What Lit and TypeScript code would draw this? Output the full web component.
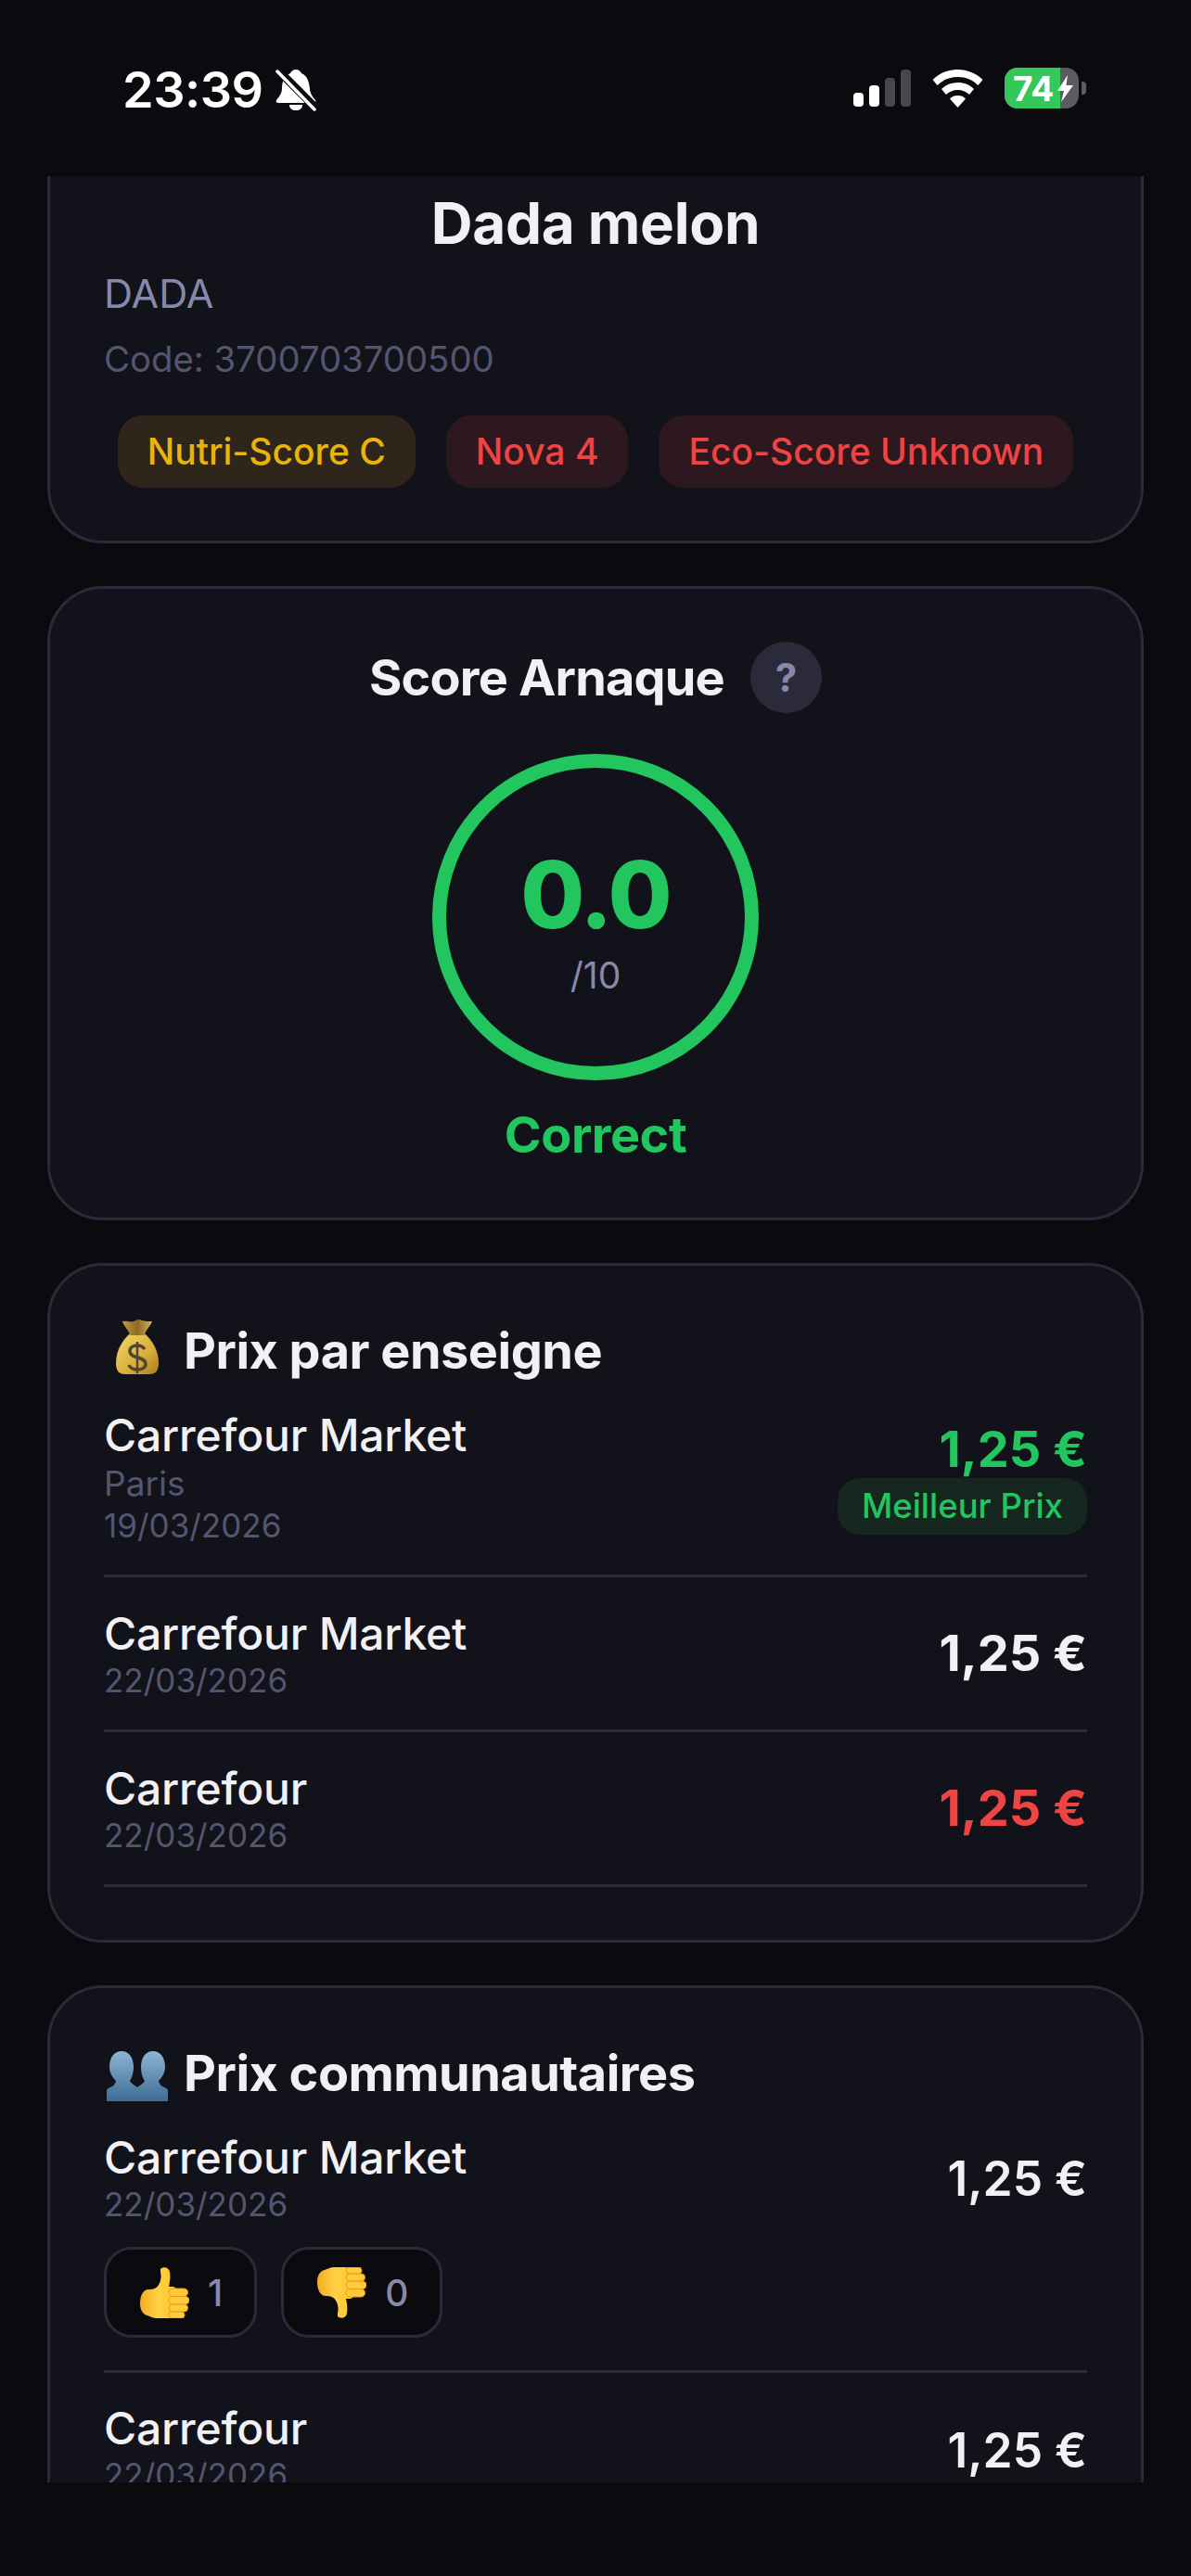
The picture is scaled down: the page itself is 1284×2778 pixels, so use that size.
import { LitElement, html, css } from "lit";
import { customElement } from "lit/decorators.js";

const thumb = (flip: boolean, id: string) => html`<svg class="thumb" viewBox="0 0 53 55">
  <defs><linearGradient id=${id} x1="0" y1="0" x2="1" y2="0"><stop offset="0" stop-color="#f5ac1f"/><stop offset=".5" stop-color="#ffd145"/><stop offset="1" stop-color="#ffc62e"/></linearGradient></defs>
  <g transform=${flip ? "translate(0 55) scale(1 -1)" : ""}>
    <path fill="url(#${id})" d="M22 2c3-3 9-2 10 3 1 6 0 11-1 16h4c3 0 4 2 4 4l-2 26c-1 3-3 4-6 4H18c-4 0-7-2-10-3-5-1-8-6-8-13 0-8 3-15 9-15 5 0 9-1 11-5 3-5 3-10 2-14 0-1 0-2 0-3z"/>
    <g fill="#ffcb3d" stroke="#eb9c12" stroke-width="1"><rect x="31" y="23" width="20.5" height="8.500" rx="4.200"/><rect x="31" y="31.500" width="22" height="8.500" rx="4.200"/><rect x="31" y="40" width="20.500" height="8" rx="4"/><rect x="31" y="48" width="17" height="7" rx="3.500"/></g>
  </g>
</svg>`;

@customElement("app-root")
export class AppRoot extends LitElement {
  static styles = css`
    :host { display: block; width: 1284px; height: 2778px; background: #0a0a0f; overflow: hidden;
      font-family: Inter, "Liberation Sans", sans-serif; color: #f0f0f5; }
    * { box-sizing: border-box; }
    .status { height: 190px; background: #0a0a0f; display: flex; justify-content: space-between; align-items: flex-start; padding: 72px 113px 0 132px; }
    .time-group { display: flex; align-items: center; gap: 13px; }
    .time { font-size: 54px; font-weight: 600; line-height: 50px; color: #fff; letter-spacing: -.5px; }
    .bell { width: 44px; height: 46px; display: block; }
    .status-right { display: flex; align-items: center; height: 46px; }
    .signal { width: 62px; height: 42px; display: block; margin-right: 23px; }
    .wifi { width: 55px; height: 42px; display: block; margin-right: 23px; }
    .battery { width: 80px; height: 44px; border-radius: 14px; overflow: hidden; position: relative; display: flex; background: #5b5b60; }
    .battery-fill { width: 60px; height: 44px; background: #34c759; }
    .battery-text { position: absolute; left: 9px; top: 0; line-height: 46px; font-size: 37px; font-weight: 700; color: #fff; }
    .bolt { position: absolute; left: 57px; top: 8px; width: 17px; height: 29px; }
    .cap { width: 5px; height: 14px; background: #5b5b60; border-radius: 0 4px 4px 0; margin-left: 3px; }
    .scroll { height: 2487px; overflow: hidden; padding: 0 51px; }
    .card { background: #12121a; border: 3px solid #2a2a3a; border-radius: 60px; padding: 0 58px; margin-bottom: 46px; }
    .product { margin-top: -60px; height: 456px; padding-top: 66px; }
    .product-name { text-align: center; font-size: 62px; font-weight: 700; line-height: 84px; letter-spacing: -.3px; }
    .brand { font-size: 43px; line-height: 50px; color: #8888aa; margin-top: 8px; }
    .code { font-size: 38.300px; line-height: 44px; color: #555570; margin-top: 24px; }
    .tags { display: flex; justify-content: center; gap: 33px; margin-top: 39px; }
    .tag { height: 78px; line-height: 78px; padding: 0 32px; border-radius: 27px; font-size: 39px; font-weight: 500; }
    .tag.y { background: #2e261a; color: #eab308; }
    .tag.r { background: #2e181f; color: #ef4444; }
    .score { height: 684px; padding-top: 57px; display: flex; flex-direction: column; align-items: center; }
    .score-head { display: flex; align-items: center; gap: 28px; height: 77px; }
    .score-title { font-size: 54px; font-weight: 700; line-height: 77px; letter-spacing: -.8px; }
    .help { width: 77px; height: 77px; border-radius: 50%; background: #2a2a3a; color: #8888aa; font-weight: 700; font-size: 42px; line-height: 77px; text-align: center; }
    .ring { width: 352px; height: 352px; border: 15px solid #22c55e; border-radius: 50%; margin-top: 44px; display: flex; flex-direction: column; align-items: center; }
    .ring-value { font-size: 100px; font-weight: 800; color: #22c55e; line-height: 110px; margin-top: 82px; letter-spacing: -2px; }
    .ring-max { font-size: 39px; color: #8888aa; line-height: 48px; margin-top: 8px; }
    .verdict { font-size: 54px; font-weight: 700; color: #22c55e; line-height: 66px; margin-top: 26px; letter-spacing: -.5px; }
    .section-title { display: flex; align-items: center; gap: 27px; font-size: 54px; font-weight: 700; line-height: 66px; padding-top: 59px; letter-spacing: -.5px; }
    .emoji { display: block; flex: none; }
    .money { width: 46px; height: 60px; margin: -4px 0 6px 13px; }
    .busts { width: 66px; height: 54px; margin-right: -10px; margin-left: 3px; margin-top: 6px; }
    .row { display: flex; justify-content: space-between; align-items: center; border-bottom: 3px solid #2a2a3a; }
    .name { font-size: 48px; font-weight: 500; line-height: 58px; letter-spacing: -.2px; }
    .sub { font-size: 35px; line-height: 42px; color: #555570; }
    .sub.place { font-size: 37px; margin-top: 2px; }
    .sub.after { margin-top: 3px; }
    .price { font-size: 54px; font-weight: 700; line-height: 62px; color: #f0f0f5; }
    .price.g { color: #22c55e; } .price.r { color: #ef4444; }
    .right { display: flex; flex-direction: column; align-items: flex-end; }
    .right.top { margin-top: 13px; }
    .best { height: 61px; line-height: 61px; padding: 0 26px; background: #15271f; color: #22c55e; border-radius: 24px; font-size: 36.500px; font-weight: 500; }
    .r1 { height: 202px; padding-top: 20px; align-items: flex-start; }
    .r2 { height: 167px; }
    .retail { height: 733px; }
    .retail .list { margin-top: 9px; }
    .comm-row { display: flex; justify-content: space-between; border-bottom: 3px solid #2a2a3a; height: 290px; padding-top: 29px; }
    .comm-row.last { height: 400px; border-bottom: 0; padding-top: 31px; }
    .comm-price { font-size: 51.500px; font-weight: 600; line-height: 62px; margin-top: 20px; }
    .comm-row.last .comm-price { margin-top: 21px; }
    .votes { display: flex; gap: 26px; margin-top: 25px; }
    .vote { height: 98px; border: 3px solid #2a2a3a; border-radius: 30px; background: #0a0a0f; display: flex; align-items: center; gap: 20px; padding: 0 34px 0 36px; font-size: 39px; font-weight: 500; color: #8888aa; }
    .thumb { width: 53px; height: 55px; display: block; }
  `;

  render() {
    return html`
      <div class="status">
        <div class="time-group">
          <span class="time">23:39</span>
          <svg class="bell" viewBox="0 0 44 46">
            <path fill="#fff" d="M22 1c3 0 5 2 6 4 7 3 8 10 9 16 0 6 3 9 6 13 1 2 0 3-2 3H3c-2 0-3-1-2-3 3-4 6-7 6-13 0-6 2-13 9-16 1-2 3-4 6-4z"/>
            <path fill="#fff" d="M15 39h14c0 4-3 6-7 6s-7-2-7-6z"/>
            <path stroke="#0a0a0f" stroke-width="9" d="M0 -1 46 45"/>
            <path stroke="#fff" stroke-width="3.500" stroke-linecap="round" d="M2 3 42 44"/>
          </svg>
        </div>
        <div class="status-right">
          <svg class="signal" viewBox="0 0 62 42">
            <rect x="0" y="26" width="11" height="15" rx="4" fill="#fff"/>
            <rect x="17" y="18" width="11" height="23" rx="4" fill="#fff"/>
            <rect x="34" y="10" width="11" height="31" rx="4" fill="#48484c"/>
            <rect x="51" y="1" width="11" height="40" rx="4" fill="#48484c"/>
          </svg>
          <svg class="wifi" viewBox="0 0 55 42">
            <path fill="#fff" d="M27.500 1C38 1 47.500 5 54.500 12l-5 6C43.500 12 36 9 27.500 9S11.500 12 5.500 18l-5-6C7.500 5 17 1 27.500 1z"/>
            <path fill="#fff" d="M27.500 15c7 0 13 2.500 17.500 7l-5 6c-3-3-7.500-5-12.500-5s-9.500 2-12.500 5l-5-6c4.500-4.500 10.500-7 17.500-7z"/>
            <path fill="#fff" d="M27.500 29c3.500 0 6.500 1 8.500 3.500L27.500 42 19 32.500c2-2.500 5-3.500 8.500-3.500z"/>
          </svg>
          <div class="battery">
            <div class="battery-fill"></div>
            <span class="battery-text">74</span>
            <svg class="bolt" viewBox="0 0 17 29"><path fill="#fff" d="M11 0 0 17h7L4 29 17 11H9.500z"/></svg>
          </div>
          <div class="cap"></div>
        </div>
      </div>
      <div class="scroll">
        <div class="card product">
          <div class="product-name">Dada melon</div>
          <div class="brand">DADA</div>
          <div class="code">Code: 3700703700500</div>
          <div class="tags">
            <span class="tag y">Nutri-Score C</span>
            <span class="tag r">Nova 4</span>
            <span class="tag r">Eco-Score Unknown</span>
          </div>
        </div>
        <div class="card score">
          <div class="score-head"><span class="score-title">Score Arnaque</span><span class="help">?</span></div>
          <div class="ring"><span class="ring-value">0.0</span><span class="ring-max">/10</span></div>
          <div class="verdict">Correct</div>
        </div>
        <div class="card retail">
          <div class="section-title">
            <svg class="emoji money" viewBox="0 0 46 60">
              <defs><linearGradient id="mb" x1="0" y1="0" x2="1" y2="1"><stop offset="0" stop-color="#f1d668"/><stop offset=".6" stop-color="#d9ae3c"/><stop offset="1" stop-color="#a87d1c"/></linearGradient>
              <linearGradient id="mn" x1="0" y1="0" x2="1" y2="0"><stop offset="0" stop-color="#c79a3e"/><stop offset=".5" stop-color="#8a6a25"/><stop offset="1" stop-color="#d8b255"/></linearGradient></defs>
              <path fill="url(#mb)" d="M14 17h18c6 6 14 16 14 31 0 9-4 12-10 12H10C4 60 0 57 0 48c0-15 8-25 14-31z"/>
              <path fill="url(#mn)" d="M7 3c5-1 8 1 12 0 4-2 6-3 9-1 4 1 7 1 11 1-1 4-7 9-8 15H15C14 12 8 8 7 3z"/>
              <path fill="none" stroke="#54452f" stroke-width="3.500" d="M31 33c-2-3-5-4-8-4-4 0-8 2-8 6 0 9 17 5 17 14 0 4-4 6-9 6-4 0-8-2-9-5"/>
              <path stroke="#54452f" stroke-width="2.500" d="M23 25v34"/>
            </svg>
            <span>Prix par enseigne</span>
          </div>
          <div class="list">
            <div class="row r1">
              <div><div class="name">Carrefour Market</div><div class="sub place">Paris</div><div class="sub after">19/03/2026</div></div>
              <div class="right top"><span class="price g">1,25 €</span><span class="best">Meilleur Prix</span></div>
            </div>
            <div class="row r2">
              <div><div class="name">Carrefour Market</div><div class="sub">22/03/2026</div></div>
              <div class="right"><span class="price">1,25 €</span></div>
            </div>
            <div class="row r2">
              <div><div class="name">Carrefour</div><div class="sub">22/03/2026</div></div>
              <div class="right"><span class="price r">1,25 €</span></div>
            </div>
          </div>
        </div>
        <div class="card comm">
          <div class="section-title">
            <svg class="emoji busts" viewBox="0 0 66 54">
              <defs><linearGradient id="bu" x1="0" y1="0" x2="0" y2="1"><stop offset="0" stop-color="#8db4d4"/><stop offset="1" stop-color="#3f6c94"/></linearGradient></defs>
              <path fill="url(#bu)" d="M16 0c8 0 13 7 13 17 0 7-2 12-4 15 1 3 6 5 8 7v15H0V43c0-2 1-3 4-4 3-1 5-3 6-7-3-3-7-8-7-15C3 7 8 0 16 0z"/>
              <path fill="url(#bu)" d="M50 0c8 0 13 7 13 17 0 7-4 12-7 15 1 4 3 6 6 7 3 1 4 2 4 4v11H33V39c2-2 7-4 8-7-2-3-4-8-4-15C37 7 42 0 50 0z"/>
            </svg>
            <span>Prix communautaires</span>
          </div>
          <div class="comm-row">
            <div>
              <div class="name">Carrefour Market</div><div class="sub">22/03/2026</div>
              <div class="votes">
                <div class="vote">${thumb(false, "tu")}<span>1</span></div>
                <div class="vote">${thumb(true, "td")}<span>0</span></div>
              </div>
            </div>
            <span class="comm-price">1,25 €</span>
          </div>
          <div class="comm-row last">
            <div><div class="name">Carrefour</div><div class="sub">22/03/2026</div></div>
            <span class="comm-price">1,25 €</span>
          </div>
        </div>
      </div>
    `;
  }
}
